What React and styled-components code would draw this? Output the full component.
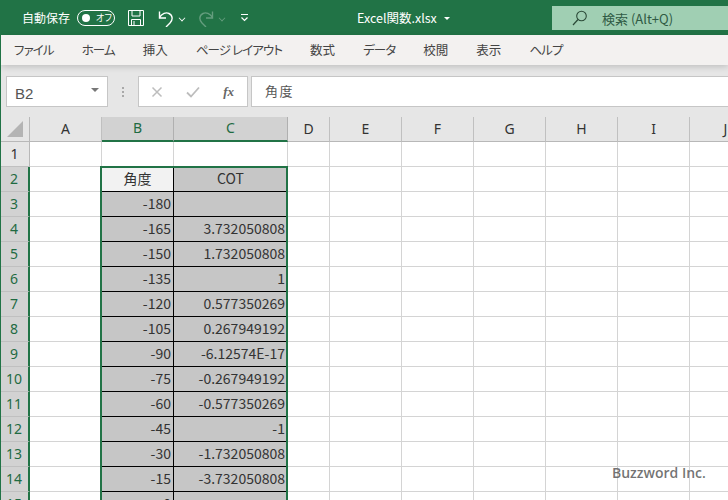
import React from "react";
import styled, { createGlobalStyle } from "styled-components";

const COLUMNS = [
  { name: "A", width: 72 },
  { name: "B", width: 72, selected: true },
  { name: "C", width: 114, selected: true },
  { name: "D", width: 42 },
  { name: "E", width: 72 },
  { name: "F", width: 72 },
  { name: "G", width: 72 },
  { name: "H", width: 72 },
  { name: "I", width: 72 },
  { name: "J", width: 72 },
];

const TEMPLATE = "30px " + COLUMNS.map((c) => c.width + "px").join(" ");

const TABS = [
  { label: "ファイル", kana: true },
  { label: "ホーム", kana: true },
  { label: "挿入" },
  { label: "ページ レイアウト", kana: true },
  { label: "数式" },
  { label: "データ", kana: true },
  { label: "校閲" },
  { label: "表示" },
  { label: "ヘルプ", kana: true },
];

const DATA = [
  ["-180", ""],
  ["-165", "3.732050808"],
  ["-150", "1.732050808"],
  ["-135", "1"],
  ["-120", "0.577350269"],
  ["-105", "0.267949192"],
  ["-90", "-6.12574E-17"],
  ["-75", "-0.267949192"],
  ["-60", "-0.577350269"],
  ["-45", "-1"],
  ["-30", "-1.732050808"],
  ["-15", "-3.732050808"],
  ["0", ""],
];

function Row({ number, selected, children }) {
  return (
    <GridRow>
      <RowHead $selected={selected}>{number}</RowHead>
      {children}
    </GridRow>
  );
}

function EmptyCols() {
  return COLUMNS.slice(3).map((c) => <Cell key={c.name} />);
}

function App() {
  return (
    <Page>
      <GlobalStyle />
      <TitleBar>
        <AutoSave>自動保存</AutoSave>
        <Toggle>
          <Knob />
          <ToggleText>オフ</ToggleText>
        </Toggle>
        <QuickIcon width="18" height="18" viewBox="0 0 18 18" $left={12}>
          <path d="M1.5 1.5h15v15h-15zM5 1.5v5.500h8v-5.500M4.500 16.500v-6h9v6M7 12v4.500" fill="none" stroke="#fff" strokeWidth="1" />
        </QuickIcon>
        <QuickIcon width="18" height="18" viewBox="0 0 18 18" $left={12}>
          <path d="M2.500 2.500v6.500h6.500M2.500 8.500C5 4.500 9 3 12 4.500c4 2 4 6.500 1 9.500l-4 4" fill="none" stroke="#fff" strokeWidth="1.400" />
        </QuickIcon>
        <Caret $left={4} />
        <QuickIcon width="18" height="18" viewBox="0 0 18 18" $left={12} $dim>
          <path d="M15.500 2.500v6.500h-6.500M15.500 8.500C13 4.500 9 3 6 4.500c-4 2-4 6.500-1 9.500l4 4" fill="none" stroke="#fff" strokeWidth="1.400" />
        </QuickIcon>
        <Caret $left={4} $dim />
        <QuickIcon width="9" height="9" viewBox="0 0 9 9" $left={15}>
          <path d="M1 1.500h7M1.500 4.500l3 3 3-3" fill="none" stroke="#fff" strokeWidth="1.200" />
        </QuickIcon>
        <FileName>Excel関数.xlsx</FileName>
        <FileCaret />
        <SearchBox>
          <svg width="16" height="16" viewBox="0 0 16 16">
            <circle cx="9.500" cy="6" r="4.800" fill="none" stroke="#2b4a38" strokeWidth="1.100" />
            <path d="M6 9.500L1 15" stroke="#2b4a38" strokeWidth="1.200" />
          </svg>
          <SearchText>検索 (Alt+Q)</SearchText>
        </SearchBox>
      </TitleBar>

      <TabBar>
        {TABS.map((t) => (
          <Tab key={t.label} $kana={t.kana}>
            {t.label}
          </Tab>
        ))}
      </TabBar>

      <FormulaBar>
        <NameBox>
          <NameText>B2</NameText>
          <NameCaret />
        </NameBox>
        <Dots>
          <i />
          <i />
          <i />
        </Dots>
        <FuncBox>
          <svg width="12" height="12" viewBox="0 0 12 12">
            <path d="M1.500 1.500l9 9M10.500 1.500l-9 9" stroke="#bdbdbd" strokeWidth="1.500" />
          </svg>
          <svg width="14" height="12" viewBox="0 0 14 12">
            <path d="M1 6.500l4 4 8-9" fill="none" stroke="#bdbdbd" strokeWidth="1.800" />
          </svg>
          <Fx>fx</Fx>
        </FuncBox>
        <FormulaInput>角度</FormulaInput>
      </FormulaBar>

      <Sheet>
        <GridRow $head>
          <Corner>
            <svg width="18" height="18" viewBox="0 0 18 18">
              <path d="M17 1v16H1z" fill="#b4b4b4" />
            </svg>
          </Corner>
          {COLUMNS.map((c) => (
            <ColHead key={c.name} $selected={c.selected}>
              {c.name}
            </ColHead>
          ))}
        </GridRow>

        <Body>
          <Row number={1}>
            <Cell />
            <Cell />
            <Cell />
            <EmptyCols />
          </Row>
          <Row number={2} selected>
            <Cell />
            <DataCell $active $center>角度</DataCell>
            <DataCell $center>COT</DataCell>
            <EmptyCols />
          </Row>
          {DATA.map(([angle, cot], i) => (
            <Row key={i} number={i + 3} selected>
              <Cell />
              <DataCell>{angle}</DataCell>
              <DataCell>{cot}</DataCell>
              <EmptyCols />
            </Row>
          ))}
          <SelectionFrame />
        </Body>
      </Sheet>

      <Watermark>Buzzword Inc.</Watermark>
    </Page>
  );
}

//============================== Styles ======================================//

const GlobalStyle = createGlobalStyle`
  html, body {
    margin: 0;
    padding: 0;
    background: #ffffff;
  }
`;

const UI_FONT = `"Noto Sans CJK JP", "Noto Sans", sans-serif`;

const Page = styled.div`
  position: relative;
  width: 728px;
  height: 500px;
  overflow: hidden;
  font-family: ${UI_FONT};
  color: #333;
  border-left: 1px solid #217346;
  box-sizing: border-box;
`;

const TitleBar = styled.div`
  height: 35px;
  margin-left: -1px;
  background: #217346;
  display: flex;
  align-items: center;
  color: #ffffff;
`;

const AutoSave = styled.span`
  margin-left: 22px;
  font-size: 12px;
  letter-spacing: 0;
`;

const Toggle = styled.div`
  margin-left: 7px;
  width: 38px;
  height: 16px;
  border: 1px solid #fff;
  border-radius: 9px;
  box-sizing: border-box;
  display: flex;
  align-items: center;
  padding-left: 4px;
`;

const Knob = styled.span`
  width: 8px;
  height: 8px;
  border-radius: 50%;
  background: #fff;
`;

const ToggleText = styled.span`
  margin-left: 6px;
  font-size: 9px;
  line-height: 1;
  font-feature-settings: "palt";
`;

const QuickIcon = styled.svg`
  margin-left: ${(p) => p.$left}px;
  opacity: ${(p) => (p.$dim ? 0.3 : 1)};
  flex: none;
`;

const Caret = styled.span`
  margin-left: ${(p) => p.$left}px;
  width: 5px;
  height: 5px;
  border-right: 1px solid #fff;
  border-bottom: 1px solid #fff;
  transform: scale(0.8) rotate(45deg);
  opacity: ${(p) => (p.$dim ? 0.3 : 1)};
`;

const FileName = styled.span`
  margin-left: 108px;
  font-size: 12.5px;
  width: 82px;
  white-space: nowrap;
`;

const FileCaret = styled.span`
  margin-left: 5px;
  margin-top: 1px;
  border-left: 3px solid transparent;
  border-right: 3px solid transparent;
  border-top: 3px solid #fff;
`;

const SearchBox = styled.div`
  margin-left: auto;
  margin-top: 1px;
  width: 176px;
  height: 24px;
  background: #a0cfb3;
  display: flex;
  align-items: center;
  padding-left: 20px;
  box-sizing: border-box;
`;

const SearchText = styled.span`
  margin-left: 14px;
  font-size: 13px;
  color: #2f5a44;
`;

const TabBar = styled.div`
  height: 30px;
  background: #f3f1f0;
  display: flex;
  align-items: center;
  gap: 28px;
  padding: 0 0 1px 13px;
  box-sizing: border-box;
  position: relative;
  box-shadow: 0 2px 6px rgba(0, 0, 0, 0.16);
`;

const Tab = styled.span`
  font-size: 12.5px;
  color: #444;
  white-space: nowrap;
  font-feature-settings: "palt";
  letter-spacing: ${(p) => (p.$kana ? "-0.9px" : "0")};
`;

const FormulaBar = styled.div`
  height: 52px;
  background: #e6e6e6;
  display: flex;
  align-items: flex-start;
  padding: 11px 0 0 5px;
  box-sizing: border-box;
`;

const BarBox = styled.div`
  height: 31px;
  box-sizing: border-box;
  background: #fff;
  border: 1px solid #c6c6c6;
  display: flex;
  align-items: center;
`;

const NameBox = styled(BarBox)`
  width: 102px;
  padding: 0 8px;
  justify-content: space-between;
`;

const NameText = styled.span`
  font-family: "Liberation Sans", sans-serif;
  font-size: 15px;
  color: #555;
  margin-top: 3px;
`;

const NameCaret = styled.span`
  border-left: 4px solid transparent;
  border-right: 4px solid transparent;
  border-top: 4px solid #777;
  margin-top: -4px;
`;

const Dots = styled.div`
  width: 30px;
  height: 31px;
  display: flex;
  flex-direction: column;
  align-items: center;
  justify-content: center;
  gap: 2px;
  i {
    width: 2px;
    height: 2px;
    background: #a8a8a8;
  }
`;

const FuncBox = styled(BarBox)`
  width: 110px;
  padding: 0 13px 0 12px;
  justify-content: space-between;
`;

const Fx = styled.span`
  font-family: "Liberation Serif", serif;
  font-style: italic;
  font-weight: bold;
  font-size: 13px;
  color: #666;
`;

const FormulaInput = styled(BarBox)`
  flex: 1;
  margin-left: 3px;
  border-right: 0;
  padding: 0 0 2px 13px;
  font-size: 13px;
  color: #555;
  letter-spacing: 1.500px;
`;

const Sheet = styled.div`
  margin-left: -1px;
`;

const GridRow = styled.div`
  display: grid;
  grid-template-columns: ${TEMPLATE};
  height: 25px;
  background: ${(p) => (p.$head ? "#e6e6e6" : "#fff")};
`;

const Corner = styled.div`
  border-right: 1px solid #b8b8b8;
  border-bottom: 1px solid #b8b8b8;
  box-sizing: border-box;
  display: flex;
  align-items: center;
  justify-content: center;
`;

const ColHead = styled.div`
  box-sizing: border-box;
  display: flex;
  align-items: center;
  justify-content: center;
  font-family: "Noto Sans", sans-serif;
  font-size: 14px;
  padding-bottom: 2px;
  color: ${(p) => (p.$selected ? "#1f6b42" : "#333")};
  background: ${(p) => (p.$selected ? "#d2d2d2" : "#e6e6e6")};
  border-right: 1px solid ${(p) => (p.$selected ? "#b0b0b0" : "#c0c0c0")};
  border-bottom: ${(p) => (p.$selected ? "2px solid #217346" : "1px solid #b8b8b8")};
`;

const RowHead = styled.div`
  box-sizing: border-box;
  display: flex;
  align-items: center;
  justify-content: center;
  font-family: "Noto Sans", sans-serif;
  font-size: 14px;
  padding-bottom: 2px;
  color: ${(p) => (p.$selected ? "#1f6b42" : "#333")};
  background: ${(p) => (p.$selected ? "#d2d2d2" : "#e6e6e6")};
  border-right: ${(p) => (p.$selected ? "2px solid #217346" : "1px solid #b8b8b8")};
  border-bottom: 1px solid #c0c0c0;
`;

const Cell = styled.div`
  box-sizing: border-box;
  border-right: 1px solid #d4d4d4;
  border-bottom: 1px solid #d4d4d4;
`;

const DataCell = styled.div`
  box-sizing: border-box;
  display: flex;
  align-items: center;
  justify-content: ${(p) => (p.$center ? "center" : "flex-end")};
  padding: 0 ${(p) => (p.$center ? 0 : "2px")} 2px 0;
  font-size: 14px;
  color: #333;
  background: ${(p) => (p.$active ? "#f2f2f2" : "#c6c6c6")};
  border-right: 1px solid #000;
  border-bottom: 1px solid #000;
  white-space: nowrap;
`;

const Body = styled.div`
  position: relative;
`;

const SelectionFrame = styled.div`
  position: absolute;
  left: 100px;
  top: 24px;
  width: 188px;
  height: 400px;
  box-sizing: border-box;
  border: 2px solid #217346;
  pointer-events: none;
`;

const Watermark = styled.div`
  position: absolute;
  left: 611px;
  top: 463px;
  font-family: "Open Sans", "Noto Sans", sans-serif;
  font-weight: 600;
  font-size: 14px;
  line-height: 20px;
  color: rgba(90, 90, 90, 0.85);
  white-space: nowrap;
`;

export default App;
